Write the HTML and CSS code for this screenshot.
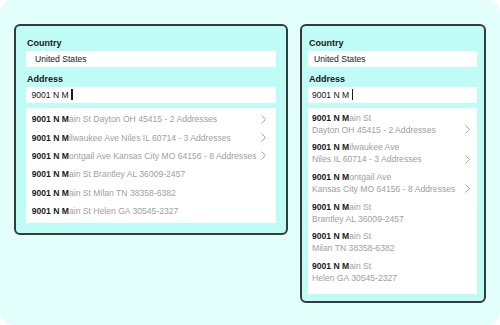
FILE: index.html
```html
<!DOCTYPE html>
<html>
<head>
<meta charset="utf-8">
<link rel="stylesheet" href="styles.css">
</head>
<body>
<div class="frame">
  <div class="card card-wide">
    <div class="label">Country</div>
    <div class="input input-country">United States</div>
    <div class="label label-gap">Address</div>
    <div class="input input-address">9001 N M<span class="caret"></span></div>
    <div class="list">
      <div class="row"><span><b>9001 N M</b>ain St Dayton OH 45415 - 2 Addresses</span><svg class="chev" width="5" height="9" viewBox="0 0 5 9"><polyline points="0.5,0.5 4.5,4.5 0.5,8.5"/></svg></div>
      <div class="row"><span><b>9001 N M</b>ilwaukee Ave Niles IL 60714 - 3 Addresses</span><svg class="chev" width="5" height="9" viewBox="0 0 5 9"><polyline points="0.5,0.5 4.5,4.5 0.5,8.5"/></svg></div>
      <div class="row"><span><b>9001 N M</b>ontgail Ave Kansas City MO 64156 - 8 Addresses</span><svg class="chev" width="5" height="9" viewBox="0 0 5 9"><polyline points="0.5,0.5 4.5,4.5 0.5,8.5"/></svg></div>
      <div class="row"><span><b>9001 N M</b>ain St Brantley AL 36009-2457</span></div>
      <div class="row"><span><b>9001 N M</b>ain St Milan TN 38358-6382</span></div>
      <div class="row"><span><b>9001 N M</b>ain St Helen GA 30545-2327</span></div>
    </div>
  </div>
  <div class="card card-narrow">
    <div class="label">Country</div>
    <div class="input input-country">United States</div>
    <div class="label label-gap">Address</div>
    <div class="input input-address">9001 N M<span class="caret"></span></div>
    <div class="list">
      <div class="group"><div class="line"><b>9001 N M</b>ain St</div><div class="line line2"><span>Dayton OH 45415 - 2 Addresses</span><svg class="chev" width="5" height="9" viewBox="0 0 5 9"><polyline points="0.5,0.5 4.5,4.5 0.5,8.5"/></svg></div></div>
      <div class="group"><div class="line"><b>9001 N M</b>ilwaukee Ave</div><div class="line line2"><span>Niles IL 60714 - 3 Addresses</span><svg class="chev" width="5" height="9" viewBox="0 0 5 9"><polyline points="0.5,0.5 4.5,4.5 0.5,8.5"/></svg></div></div>
      <div class="group"><div class="line"><b>9001 N M</b>ontgail Ave</div><div class="line line2"><span>Kansas City MO 64156 - 8 Addresses</span><svg class="chev" width="5" height="9" viewBox="0 0 5 9"><polyline points="0.5,0.5 4.5,4.5 0.5,8.5"/></svg></div></div>
      <div class="group"><div class="line"><b>9001 N M</b>ain St</div><div class="line line2"><span>Brantley AL 36009-2457</span></div></div>
      <div class="group"><div class="line"><b>9001 N M</b>ain St</div><div class="line line2"><span>Milan TN 38358-6382</span></div></div>
      <div class="group"><div class="line"><b>9001 N M</b>ain St</div><div class="line line2"><span>Helen GA 30545-2327</span></div></div>
    </div>
  </div>
</div>
</body>
</html>
```
FILE: styles.css
```css
* { box-sizing: border-box; }
html, body { margin: 0; padding: 0; background: #ffffff; }
body {
  font-family: "Liberation Sans", Arial, sans-serif;
  color: #1c1c1c;
}
.frame {
  width: 500px;
  height: 325px;
  background: #e3fffc;
  border-radius: 14px;
  display: flex;
  align-items: flex-start;
  gap: 12px;
  padding: 24px 14px 0 14px;
}
.card {
  background: #bffcf6;
  border: 2px solid #353b3b;
  border-radius: 6px;
  display: flex;
  flex-direction: column;
  padding-top: 11px;
}
.card-wide {
  width: 274px;
  padding-left: 10px;
  padding-right: 10px;
  padding-bottom: 10px;
}
.card-narrow {
  width: 186px;
  padding-left: 6px;
  padding-right: 7px;
  padding-bottom: 7px;
}
.label {
  font-size: 9px;
  font-weight: bold;
  line-height: 12px;
  height: 12px;
  margin-bottom: 1.5px;
  padding-left: 1px;
  color: #161616;
}
.label-gap { margin-top: 6px; }
.input {
  background: #ffffff;
  height: 16.5px;
  font-size: 8.6px;
  line-height: 16.5px;
  display: flex;
  align-items: center;
  color: #161616;
}
.card-wide .input-country { padding-left: 9px; }
.card-wide .input-address { padding-left: 5.5px; }
.card-narrow .input-country { padding-left: 6px; }
.card-narrow .input-address { padding-left: 4px; }
.caret {
  display: inline-block;
  width: 1.5px;
  height: 11px;
  background: #1c1c1c;
  margin-left: 2.5px;
}
.list {
  background: #ffffff;
  margin-top: 5px;
  font-size: 8.6px;
  color: #a0a0a0;
}
.card-wide .list { padding: 2px 10px 3px 5.7px; }
.row {
  height: 18.4px;
  display: flex;
  align-items: center;
  justify-content: space-between;
  white-space: nowrap;
}
.list b { color: #1c1c1c; font-weight: bold; }
.chev { fill: none; stroke: #a8a8a8; stroke-width: 1; flex: none; }
.card-narrow .list { padding: 3.5px 7px 4px 4px; }
.group { height: 29.7px; }
.line {
  height: 12px;
  line-height: 12px;
  white-space: nowrap;
}
.line2 {
  display: flex;
  align-items: center;
  justify-content: space-between;
}
```
